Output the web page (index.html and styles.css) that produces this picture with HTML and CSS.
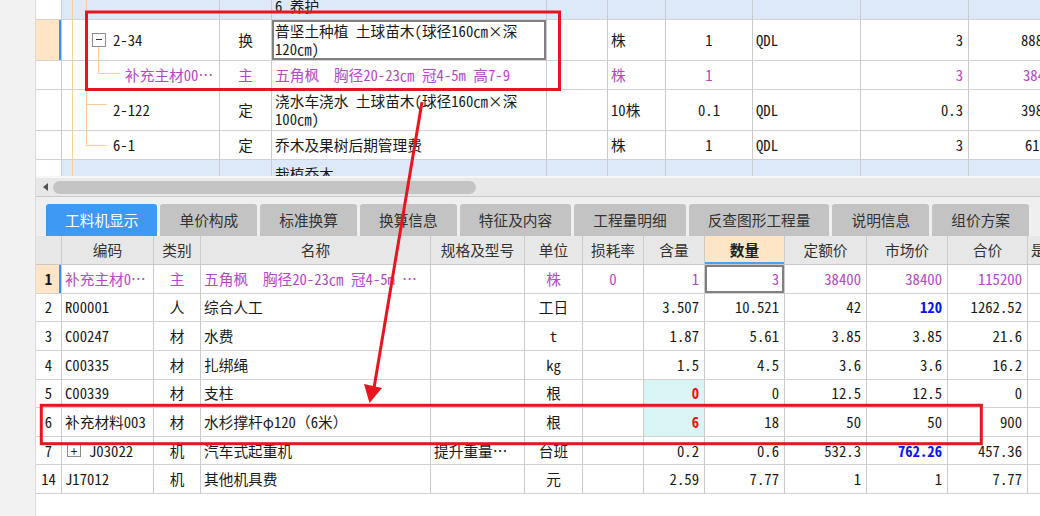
FILE: index.html
```html
<!DOCTYPE html>
<html lang="zh">
<head>
<meta charset="utf-8">
<title>工料机显示</title>
<link rel="stylesheet" href="styles.css">
</head>
<body>
<div class="app">
  <div class="side"></div>
  <div class="main">
    <div class="top">
      <div class="top-inner">
        <div class="t-row blue h28">
          <div class="c"></div>
          <div class="c code"><span class="ln v1"></span><span class="ln v2"></span></div>
          <div class="c"></div>
          <div class="c">6 养护</div>
          <div class="c"></div><div class="c"></div><div class="c"></div><div class="c"></div><div class="c"></div><div class="c"></div>
        </div>
        <div class="t-row h41">
          <div class="c rowsel"></div>
          <div class="c code"><span class="ln v1"></span><span class="ln v2"></span><span class="ln v3a"></span><span class="minus"></span><span class="code-txt">2-34</span></div>
          <div class="c ctr">换</div>
          <div class="c sel"><span class="ml">普坚土种植 土球苗木(球径160㎝×深<br>120㎝)</span></div>
          <div class="c"></div>
          <div class="c">株</div>
          <div class="c ctr">1</div>
          <div class="c">QDL</div>
          <div class="c rt">3</div>
          <div class="c last">8886</div>
        </div>
        <div class="t-row h29 purple">
          <div class="c"></div>
          <div class="c code"><span class="ln v1"></span><span class="ln v2"></span><span class="ln v3b"></span><span class="ln h3"></span><span class="code-txt sub">补充主材00⋯</span></div>
          <div class="c ctr">主</div>
          <div class="c">五角枫&nbsp;&nbsp;胸径20-23㎝ 冠4-5m 高7-9</div>
          <div class="c"></div>
          <div class="c">株</div>
          <div class="c ctr">1</div>
          <div class="c"></div>
          <div class="c rt">3</div>
          <div class="c last last-p">38400</div>
        </div>
        <div class="t-row h41">
          <div class="c"></div>
          <div class="c code"><span class="ln v1"></span><span class="ln v2"></span><span class="ln h2"></span><span class="code-txt">2-122</span></div>
          <div class="c ctr">定</div>
          <div class="c"><span class="ml">浇水车浇水 土球苗木(球径160㎝×深<br>100㎝)</span></div>
          <div class="c"></div>
          <div class="c">10株</div>
          <div class="c ctr">0.1</div>
          <div class="c">QDL</div>
          <div class="c rt">0.3</div>
          <div class="c last">3986</div>
        </div>
        <div class="t-row h29">
          <div class="c"></div>
          <div class="c code"><span class="ln v1"></span><span class="ln v2h"></span><span class="ln h2"></span><span class="code-txt">6-1</span></div>
          <div class="c ctr">定</div>
          <div class="c">乔木及果树后期管理费</div>
          <div class="c"></div>
          <div class="c">株</div>
          <div class="c ctr">1</div>
          <div class="c">QDL</div>
          <div class="c rt">3</div>
          <div class="c last last-s">615</div>
        </div>
        <div class="t-row blue h28">
          <div class="c"></div>
          <div class="c code"><span class="ln v1"></span></div>
          <div class="c"></div>
          <div class="c">栽植乔木</div>
          <div class="c"></div><div class="c"></div><div class="c"></div><div class="c"></div><div class="c"></div><div class="c"></div>
        </div>
      </div>
    </div>

    <div class="hscroll">
      <span class="arrow-left"></span>
      <span class="thumb"></span>
    </div>

    <div class="tabs">
      <div class="tab active">工料机显示</div>
      <div class="tab">单价构成</div>
      <div class="tab">标准换算</div>
      <div class="tab">换算信息</div>
      <div class="tab">特征及内容</div>
      <div class="tab">工程量明细</div>
      <div class="tab">反查图形工程量</div>
      <div class="tab">说明信息</div>
      <div class="tab">组价方案</div>
    </div>

    <div class="bottom">
      <div class="b-row head">
        <div class="c"></div>
        <div class="c ctr">编码</div>
        <div class="c ctr">类别</div>
        <div class="c ctr">名称</div>
        <div class="c ctr">规格及型号</div>
        <div class="c ctr">单位</div>
        <div class="c ctr">损耗率</div>
        <div class="c ctr">含量</div>
        <div class="c ctr qty-head">数量</div>
        <div class="c ctr">定额价</div>
        <div class="c ctr">市场价</div>
        <div class="c ctr">合价</div>
        <div class="c">是</div>
      </div>
      <div class="b-row purple">
        <div class="c ctr num rowsel bold">1</div>
        <div class="c">补充主材0⋯</div>
        <div class="c ctr">主</div>
        <div class="c">五角枫&nbsp;&nbsp;胸径20-23㎝ 冠4-5m ⋯</div>
        <div class="c"></div>
        <div class="c ctr">株</div>
        <div class="c ctr">0</div>
        <div class="c rt">1</div>
        <div class="c rt sel">3</div>
        <div class="c rt">38400</div>
        <div class="c rt">38400</div>
        <div class="c rt">115200</div>
        <div class="c"></div>
      </div>
      <div class="b-row">
        <div class="c ctr num">2</div>
        <div class="c">R00001</div>
        <div class="c ctr">人</div>
        <div class="c">综合人工</div>
        <div class="c"></div>
        <div class="c ctr">工日</div>
        <div class="c"></div>
        <div class="c rt">3.507</div>
        <div class="c rt">10.521</div>
        <div class="c rt">42</div>
        <div class="c rt blue-b">120</div>
        <div class="c rt">1262.52</div>
        <div class="c"></div>
      </div>
      <div class="b-row">
        <div class="c ctr num">3</div>
        <div class="c">C00247</div>
        <div class="c ctr">材</div>
        <div class="c">水费</div>
        <div class="c"></div>
        <div class="c ctr">t</div>
        <div class="c"></div>
        <div class="c rt">1.87</div>
        <div class="c rt">5.61</div>
        <div class="c rt">3.85</div>
        <div class="c rt">3.85</div>
        <div class="c rt">21.6</div>
        <div class="c"></div>
      </div>
      <div class="b-row">
        <div class="c ctr num">4</div>
        <div class="c">C00335</div>
        <div class="c ctr">材</div>
        <div class="c">扎绑绳</div>
        <div class="c"></div>
        <div class="c ctr">kg</div>
        <div class="c"></div>
        <div class="c rt">1.5</div>
        <div class="c rt">4.5</div>
        <div class="c rt">3.6</div>
        <div class="c rt">3.6</div>
        <div class="c rt">16.2</div>
        <div class="c"></div>
      </div>
      <div class="b-row">
        <div class="c ctr num">5</div>
        <div class="c">C00339</div>
        <div class="c ctr">材</div>
        <div class="c">支柱</div>
        <div class="c"></div>
        <div class="c ctr">根</div>
        <div class="c"></div>
        <div class="c rt cyan red-b">0</div>
        <div class="c rt">0</div>
        <div class="c rt">12.5</div>
        <div class="c rt">12.5</div>
        <div class="c rt">0</div>
        <div class="c"></div>
      </div>
      <div class="b-row">
        <div class="c ctr num">6</div>
        <div class="c">补充材料003</div>
        <div class="c ctr">材</div>
        <div class="c">水杉撑杆φ120（6米）</div>
        <div class="c"></div>
        <div class="c ctr">根</div>
        <div class="c"></div>
        <div class="c rt cyan red-b">6</div>
        <div class="c rt">18</div>
        <div class="c rt">50</div>
        <div class="c rt">50</div>
        <div class="c rt">900</div>
        <div class="c"></div>
      </div>
      <div class="b-row">
        <div class="c ctr num">7</div>
        <div class="c"><span class="plus">+</span>J03022</div>
        <div class="c ctr">机</div>
        <div class="c">汽车式起重机</div>
        <div class="c">提升重量⋯</div>
        <div class="c ctr">台班</div>
        <div class="c"></div>
        <div class="c rt">0.2</div>
        <div class="c rt">0.6</div>
        <div class="c rt">532.3</div>
        <div class="c rt blue-b">762.26</div>
        <div class="c rt">457.36</div>
        <div class="c"></div>
      </div>
      <div class="b-row">
        <div class="c ctr num">14</div>
        <div class="c">J17012</div>
        <div class="c ctr">机</div>
        <div class="c">其他机具费</div>
        <div class="c"></div>
        <div class="c ctr">元</div>
        <div class="c"></div>
        <div class="c rt">2.59</div>
        <div class="c rt">7.77</div>
        <div class="c rt">1</div>
        <div class="c rt">1</div>
        <div class="c rt">7.77</div>
        <div class="c"></div>
      </div>
    </div>
  </div>

  <svg class="annot" width="1040" height="516" viewBox="0 0 1040 516">
    <rect x="86.5" y="12" width="473" height="77.5" fill="none" stroke="#e8141e" stroke-width="3"/>
    <rect x="41.3" y="405.3" width="940" height="38.4" fill="none" stroke="#e8141e" stroke-width="3"/>
    <line x1="422" y1="102" x2="374" y2="388" stroke="#e8141e" stroke-width="3"/>
    <polygon points="364,384 382,388 369.5,403" fill="#e8141e"/>
  </svg>
</div>
</body>
</html>
```
FILE: styles.css
```css
html, body {
  margin: 0;
  padding: 0;
}
body {
  width: 1040px;
  height: 516px;
  overflow: hidden;
  background: #ffffff;
  color: #1a1a1a;
  font-family: "Noto Sans Mono CJK SC", "Noto Sans CJK SC", sans-serif;
  font-size: 14.7px;
  line-height: 18px;
}
.app {
  position: relative;
  display: flex;
  width: 1040px;
  height: 516px;
}
.side {
  flex: none;
  width: 36px;
  background: #f2f2f2;
  border-right: 1px solid #dadada;
  box-sizing: border-box;
}
.main {
  flex: 1;
  min-width: 0;
  display: flex;
  flex-direction: column;
  overflow: hidden;
}

/* generic cells */
.c {
  display: flex;
  align-items: center;
  box-sizing: border-box;
  padding: 0 3px;
  border-right: 1px solid #cbcbcb;
  border-bottom: 1px solid #d2d2d2;
  white-space: nowrap;
  overflow: hidden;
  position: relative;
  min-width: 0;
}
.ctr { justify-content: center; }
.rt { justify-content: flex-end; padding-right: 5px; }
.ml { display: block; line-height: 18px; }
.sel { box-shadow: inset 0 0 0 2px #808080; }
.rowsel {
  background: #fde5c6;
  box-shadow: inset -2px 0 0 #3b8ff2;
}
.purple .c { color: #b548c6; }
.purple .c.num { color: #1a1a1a; }
.bold { font-weight: bold; }

/* top grid */
.top {
  flex: none;
  height: 176px;
  overflow: hidden;
}
.top-inner { margin-top: -8px; }
.t-row {
  display: grid;
  grid-template-columns: 26px 158px 52px 275px 61px 58px 87px 108px 108px 120px;
}
.h28 { height: 28px; }
.h29 { height: 29px; }
.h41 { height: 41px; }
.t-row.blue .c:not(:first-child) { background: #dde8f9; }
.last { padding-left: 52px; }
.last-s { padding-left: 56px; }
.last-p { padding-left: 54px; }

.code { padding-left: 51px; }
.code-txt.sub { margin-left: 12px; }
.ln {
  position: absolute;
  background: #f8cf98;
}
.v1 { left: 10px; top: 0; bottom: 0; width: 1px; }
.v2 { left: 24px; top: 0; bottom: 0; width: 1px; }
.v2h { left: 24px; top: 0; height: 14px; width: 1px; }
.h2 { left: 24px; top: 14px; width: 21px; height: 1px; }
.v3a { left: 36px; top: 27px; bottom: 0; width: 1px; }
.v3b { left: 36px; top: 0; height: 12px; width: 1px; }
.h3 { left: 36px; top: 12px; width: 22px; height: 1px; }
.minus {
  position: absolute;
  left: 30px;
  top: 13px;
  width: 14px;
  height: 14px;
  box-sizing: border-box;
  border: 1px solid #8c8c8c;
  background: #fff;
}
.minus::after {
  content: "";
  position: absolute;
  left: 3px;
  right: 3px;
  top: 5px;
  height: 1px;
  background: #333;
}

/* horizontal scrollbar */
.hscroll {
  flex: none;
  height: 21px;
  box-sizing: border-box;
  background: #e8e8e8;
  border-top: 2px solid #f7f7f7;
  border-bottom: 1px solid #cacaca;
  display: flex;
  align-items: center;
  padding-left: 7px;
}
.arrow-left {
  width: 0;
  height: 0;
  border-top: 4px solid transparent;
  border-bottom: 4px solid transparent;
  border-right: 5px solid #555;
}
.thumb {
  margin-left: 5px;
  width: 423px;
  height: 13px;
  border-radius: 7px;
  background: #c4c4c4;
}

/* tabs */
.tabs {
  flex: none;
  height: 39px;
  box-sizing: border-box;
  background: #efefef;
  padding: 7px 0 0 10px;
  display: flex;
  gap: 3px;
  font-family: "Noto Sans CJK SC", sans-serif;
}
.tab {
  flex: none;
  height: 32px;
  padding: 0 19px;
  display: flex;
  align-items: center;
  background: #c3c3c3;
  color: #333333;
  border-radius: 3px 3px 0 0;
  font-size: 14.7px;
}
.tab.active {
  background: #3e99f5;
  color: #ffffff;
}

/* bottom grid */
.bottom { flex: none; }
.b-row {
  display: grid;
  grid-template-columns: 26px 92px 47px 230px 94px 58px 61px 61px 80px 82px 81px 80px 40px;
  height: 28.65px;
}
.b-row.head {
  height: 29px;
  font-family: "Noto Sans CJK SC", sans-serif;
  color: #333;
}
.b-row.head .c {
  background: #e7e7e7;
  border-bottom-color: #c8c8c8;
}
.b-row.head .c.qty-head {
  background: #fde5c6;
  font-weight: bold;
  color: #222;
  box-shadow: inset 0 -2px 0 #4c9ff5;
}
.num { padding: 0; }
.cyan { background: #d9f5f5; }
.red-b { color: #ee1111; font-weight: bold; }
.blue-b { color: #0a14f0; font-weight: bold; }
.plus {
  display: inline-flex;
  align-items: center;
  justify-content: center;
  width: 14px;
  height: 13px;
  box-sizing: border-box;
  border: 1px solid #8c8c8c;
  margin: 0 8px 0 2px;
  font-size: 13px;
  line-height: 1;
}

/* annotation overlay */
.annot {
  position: absolute;
  left: 0;
  top: 0;
  pointer-events: none;
}
```
